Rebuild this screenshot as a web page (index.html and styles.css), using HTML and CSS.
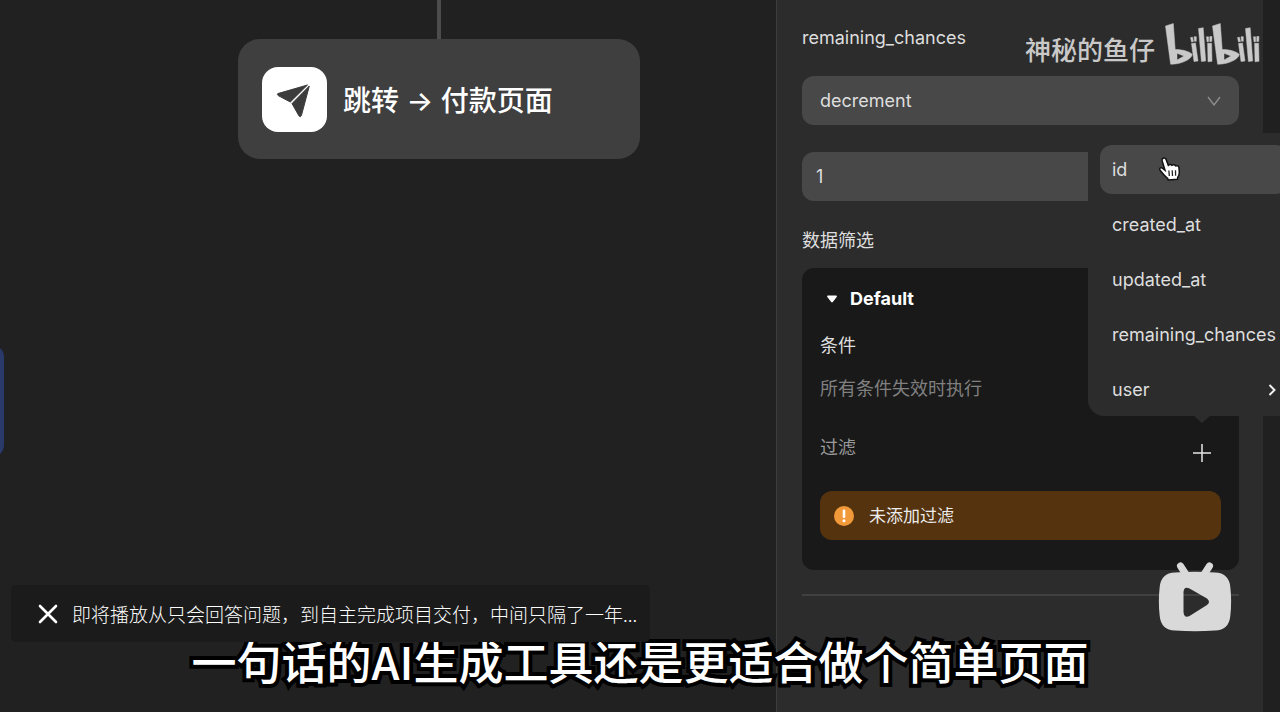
FILE: index.html
```html
<!DOCTYPE html>
<html lang="zh-CN">
<head>
  <meta charset="UTF-8">
  <meta name="viewport" content="width=device-width, initial-scale=1.0">
  <title>神秘的鱼仔</title>
  <link rel="stylesheet" href="styles.css">
</head>
<body>
  <div class="player">
    <div class="workspace">
      <!-- Flow canvas -->
      <main class="canvas">
        <div class="side-node"></div>
        <div class="connector"></div>
        <div class="node">
          <span class="node-icon">
            <svg width="38" height="38" viewBox="0 0 38 38">
              <path d="M1.800 13.600L31.500 5L14.300 22L2.200 15.600Q.8 14.300 1.800 13.600Z" fill="#3c3c3c" stroke="#3c3c3c" stroke-linejoin="round"/>
              <path d="M33.300 6L25.400 35.600Q24.300 37.600 22.900 35.800L16 23.600Z" fill="#3c3c3c" stroke="#3c3c3c" stroke-linejoin="round"/>
            </svg>
          </span>
          <span class="node-title">跳转 → 付款页面</span>
        </div>
      </main>

      <!-- Settings panel -->
      <aside class="panel">
        <label class="label" for="operation">remaining_chances</label>
        <div class="select-wrap">
          <select class="field select" id="operation">
            <option>decrement</option>
            <option>increment</option>
          </select>
          <svg class="select-arrow" width="14" height="10" viewBox="0 0 14 10">
            <path d="M1 1L7 9L13 1" fill="none" stroke="#8c8c8c" stroke-width="1.400"/>
          </svg>
        </div>
        <input class="field amount" type="text" value="1" aria-label="remaining_chances">

        <h2 class="label section-title">数据筛选</h2>
        <section class="card">
          <button class="card-toggle" type="button">
            <svg width="10" height="8" viewBox="0 0 10 8">
              <path d="M1 .5H9Q10.300 .8 9.700 2L5.800 7Q5 7.900 4.200 7L.3 2Q-.3 .8 1 .5Z" fill="#fff"/>
            </svg>
            Default
          </button>
          <p class="condition">条件</p>
          <p class="hint">所有条件失效时执行</p>
          <div class="filter-row">
            <span class="filter-label">过滤</span>
            <div class="add-wrap">
              <button class="add" type="button" aria-label="过滤">
                <svg width="18" height="18" viewBox="0 0 18 18">
                  <path d="M9 0V18M0 9H18" stroke="#e6e6e6" stroke-width="1.500"/>
                </svg>
              </button>
              <div class="menu">
                <button class="menu-item active" type="button">id</button>
                <button class="menu-item" type="button">created_at</button>
                <button class="menu-item" type="button">updated_at</button>
                <button class="menu-item" type="button">remaining_chances</button>
                <button class="menu-item" type="button">user
                  <svg width="8" height="12" viewBox="0 0 8 12">
                    <path d="M1.500 1L6.500 6L1.500 11" fill="none" stroke="#f0f0f0" stroke-width="2"/>
                  </svg>
                </button>
                <svg class="cursor" width="24" height="26" viewBox="0 0 24 26">
                  <path d="M5.200 2.200C6.500 1.600 7.700 2.300 8.100 3.600L10.300 9.300C11.500 8 13.300 8.300 14 9.300C15.300 8.200 17 8.600 17.600 9.900C19.200 9.300 20.800 10 21 11.600L21.300 16.500C21.300 19 20.500 20 19.700 21.300L19.500 23.300L10.200 24L9.600 22.300C7 20.500 5.200 18.200 3.300 15.700L1.700 13.600C1.400 12 3 11.300 4.300 12.100L7 14.200L4.100 4.600C3.800 3.500 4.300 2.600 5.200 2.200Z" fill="#fff" stroke="#111" stroke-width="1.500"/>
                  <path d="M10.900 14.500L11.300 20M14.200 14.300L14.500 20M17.500 14.300L17.600 19.700" stroke="#222" stroke-width="1.300"/>
                </svg>
              </div>
            </div>
          </div>
          <div class="alert">
            <svg width="20" height="20" viewBox="0 0 20 20">
              <circle cx="10" cy="10" r="10" fill="#f29a3a"/>
              <path d="M10 4.800V10.800" stroke="#fff" stroke-width="2.600" stroke-linecap="round"/>
              <circle cx="10" cy="14.800" r="1.500" fill="#fff"/>
            </svg>
            未添加过滤
          </div>
        </section>
        <hr class="divider">
      </aside>
      <div class="gutter"></div>
    </div>

    <!-- Uploader and site logo -->
    <div class="watermark">
      <span>神秘的鱼仔</span>
      <svg class="logo" width="95" height="42" viewBox="0 0 95 42" role="img" aria-label="bilibili">
        <defs>
          <g id="logo-half">
            <path fill-rule="evenodd" d="M0.500 3L8.300 0.500L10.200 26.500C17 26.300 25 28.500 27.300 31.500C26 37 15 41.500 5.600 41.200ZM12 30.300V37L19 33Z"/>
            <path d="M26.500 20.500L30.500 20L33 38L29 38.500ZM33.500 5.500L38.200 4.700L40.700 38L36.400 38.500ZM42.600 20.300H46.600L47 38.300L43 38.800Z"/>
            <path d="M25.500 14.500L27.500 14.200L28.500 18.500L26.500 19ZM29 13.700H31.300V18.300H29.500ZM41.500 13.800H43.600V18.800H42ZM44.800 13.500H47L46.700 18.500H44.700Z"/>
          </g>
        </defs>
        <use href="#logo-half"/>
        <use href="#logo-half" x="47"/>
      </svg>
    </div>

    <p class="caption">一句话的AI生成工具还是更适合做个简单页面</p>

    <div class="toast">
      <button class="toast-close" type="button" aria-label="关闭">
        <svg width="20" height="20" viewBox="0 0 20 20">
          <path d="M2 2L18 18M18 2L2 18" stroke="#fff" stroke-width="2.600" stroke-linecap="round"/>
        </svg>
      </button>
      <span>即将播放从只会回答问题，到自主完成项目交付，中间只隔了一年...</span>
    </div>

    <button class="play" type="button" aria-label="播放">
      <svg width="74" height="72" viewBox="0 0 74 72">
        <path d="M22.500 5L28 13.500M51.500 5L46 13.500" stroke="#d9d9d9" stroke-width="7" stroke-linecap="round"/>
        <path fill="#d9d9d9" fill-rule="evenodd" d="M17 11.500Q37 10 57 11.500Q71 12 72.300 26Q74 40 72.300 55Q71 69 57 69.600Q37 71 17 69.600Q3 69 1.700 55Q0 40 1.700 26Q3 12 17 11.500ZM25.500 31V51Q26 57.500 31.500 55L49 44Q53 41 49 37.500L31.500 27.500Q26 25 25.500 31Z"/>
      </svg>
    </button>
  </div>
</body>
</html>
```
FILE: styles.css
```css
* {
  box-sizing: border-box;
}

body {
  margin: 0;
  background: #212121;
  color: #dedede;
  font-family: Inter, "Noto Sans CJK SC", sans-serif;
  font-size: 18px;
  line-height: 28px;
}

button,
input,
select {
  border: 0;
  margin: 0;
  padding: 0;
  background: none;
  color: inherit;
  font: inherit;
}

h2,
p {
  margin: 0;
}

svg {
  display: block;
  flex-shrink: 0;
}

.player {
  position: relative;
  height: 100vh;
  overflow: hidden;
}

.workspace {
  display: grid;
  grid-template-columns: 776fr 487fr 17fr;
  height: 100%;
}

/* Flow canvas */
.canvas {
  position: relative;
  background: #212121;
}

.side-node {
  position: absolute;
  left: -20px;
  top: 345px;
  width: 24px;
  height: 112px;
  border-radius: 16px;
  background: #28396a;
}

.connector {
  position: absolute;
  left: 437px;
  top: 0;
  width: 4px;
  height: 39px;
  background: #4c4c4c;
}

.node {
  position: absolute;
  left: 238px;
  top: 39px;
  width: 402px;
  height: 120px;
  padding: 0 24px;
  display: flex;
  align-items: center;
  gap: 16px;
  border-radius: 22px;
  background: #3f3f3f;
}

.node-icon {
  display: grid;
  place-items: center;
  width: 65px;
  height: 65px;
  border-radius: 16px;
  background: #fff;
}

.node-title {
  padding-top: 4px;
  color: #fff;
  font-size: 28px;
  font-weight: 500;
}

/* Settings panel */
.panel {
  padding: 24px 24px 24px 25px;
  border-left: 1px solid #3d3d3d;
  background: #2c2c2c;
}

.gutter {
  background: #202020;
}

.label {
  display: block;
  font-size: 18px;
  font-weight: 400;
}

.field {
  display: block;
  width: 100%;
  height: 49px;
  border-radius: 12px;
  background: #484848;
}

.select-wrap {
  position: relative;
  margin: 24px 0 27px;
}

.select {
  padding: 0 18px;
  appearance: none;
}

.select-arrow {
  position: absolute;
  right: 18px;
  top: 20px;
  pointer-events: none;
}

.amount {
  padding: 0 14px;
}

.section-title {
  margin: 26px 0 13px;
}

.card {
  padding: 17px 18px 30px;
  border-radius: 12px;
  background: #191919;
}

.card-toggle {
  display: flex;
  align-items: center;
  gap: 13px;
  padding-left: 7px;
  color: #fff;
  font-weight: 700;
}

.condition {
  margin-top: 19px;
}

.hint {
  margin-top: 15px;
  color: #808080;
}

.filter-row {
  display: flex;
  justify-content: space-between;
  margin: 31px 0 19px;
  color: #999;
}

.add-wrap {
  position: relative;
}

.add {
  display: grid;
  place-items: center;
  width: 38px;
  height: 38px;
}

.alert {
  display: flex;
  align-items: center;
  gap: 15px;
  height: 49px;
  padding: 0 14px;
  border-radius: 12px;
  background: #55330f;
  color: #ececec;
  font-size: 17px;
}

.divider {
  height: 2px;
  margin: 24px 0 0;
  border: 0;
  background: #404040;
}

/* Field menu */
.menu {
  position: absolute;
  left: -95px;
  bottom: calc(100% + 18px);
  width: 212px;
  padding: 12px 12px 2px;
  display: flex;
  flex-direction: column;
  gap: 6px;
  border-radius: 16px;
  background: #2c2c2c;
  color: #dedede;
}

.menu::after {
  content: '';
  position: absolute;
  left: 106px;
  top: 100%;
  border: 8px solid transparent;
  border-top: 7px solid #2c2c2c;
  border-bottom: 0;
}

.menu-item {
  display: flex;
  align-items: center;
  justify-content: space-between;
  height: 49px;
  padding: 0 12px;
  border-radius: 12px;
}

.menu-item.active {
  background: #484848;
}

.cursor {
  position: absolute;
  left: 70px;
  top: 23px;
}

/* Video overlays */
.watermark {
  position: absolute;
  top: 23px;
  right: 20px;
  display: flex;
  align-items: flex-end;
  gap: 10px;
  color: #c9c9c9;
  font-size: 26px;
  font-weight: 500;
}

.logo {
  fill: #c9c9c9;
  stroke: #c9c9c9;
  stroke-width: 0.5;
}

.caption {
  position: absolute;
  left: 0;
  right: 0;
  bottom: 23px;
  color: #fff;
  font-family: "Noto Sans CJK SC", sans-serif;
  font-size: 45px;
  font-weight: 500;
  line-height: 56px;
  text-align: center;
  -webkit-text-stroke: 8px #000;
  paint-order: stroke fill;
}

.toast {
  position: absolute;
  left: 11px;
  bottom: 70px;
  display: flex;
  align-items: center;
  gap: 14px;
  height: 57px;
  padding: 0 13px 0 27px;
  border-radius: 5px;
  background: #1b1b1b;
  color: #fff;
  font-family: "Noto Sans CJK SC", sans-serif;
  font-size: 19px;
  font-weight: 300;
}

.play {
  position: absolute;
  right: 48px;
  bottom: 79px;
}
```
